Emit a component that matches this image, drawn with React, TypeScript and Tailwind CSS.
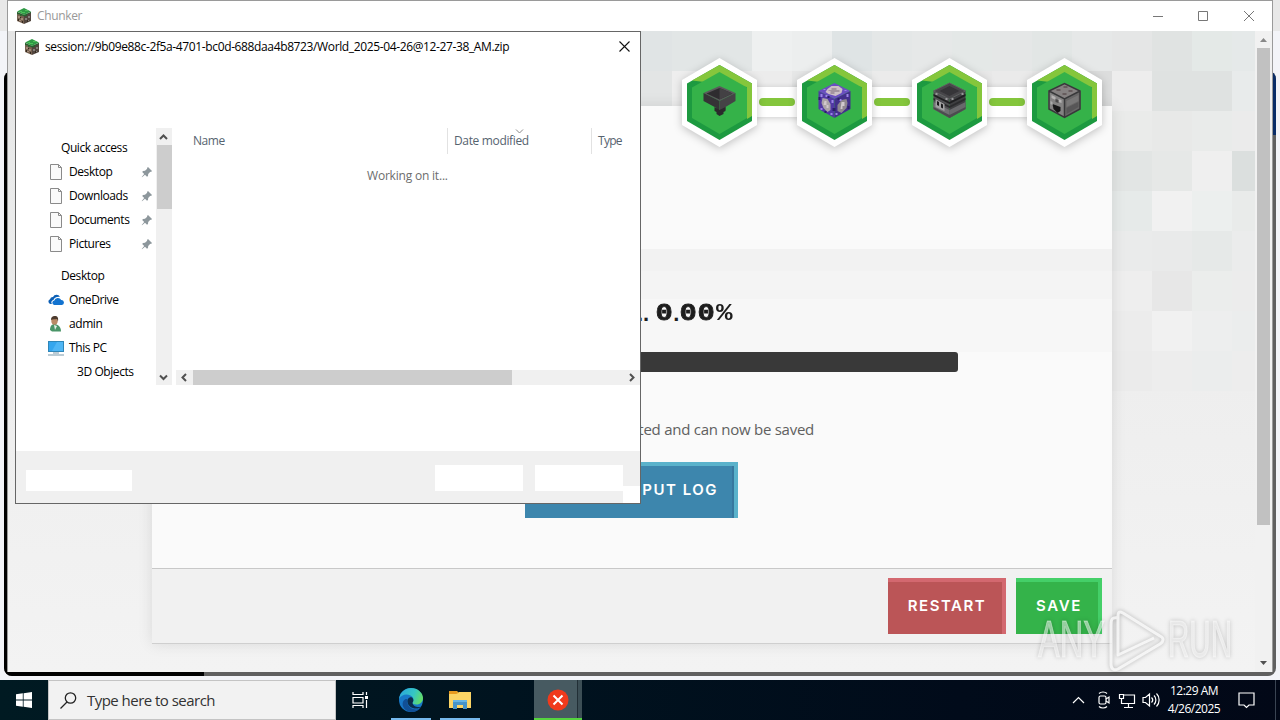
import type { ReactNode } from 'react';

const UI = "font-['Open_Sans','Noto_Sans',sans-serif]";

/* Background mosaic: 40px tiles [column x, row y, colour] */
const TILES: [number, number, string][] = [
  [624, 0, '#e0e4e5'], [664, 0, '#e2e6e6'], [704, 0, '#e2e6e6'], [744, 0, '#eef0f0'], [784, 0, '#eceeee'], [824, 0, '#dfe4e5'],
  [864, 0, '#e4e7e7'], [904, 0, '#e6e8e8'], [944, 0, '#e4e8e7'], [984, 0, '#e5e7e7'], [1024, 0, '#e2e6e5'], [1064, 0, '#e6e8e8'],
  [1104, 0, '#e5e6e6'], [1144, 0, '#e0e3e2'], [1184, 0, '#e4e9e7'], [1224, 0, '#e5e9e9'],
  [624, 40, '#e3e5e5'], [664, 40, '#eeeeee'], [704, 40, '#ececec'], [744, 40, '#ececec'], [784, 40, '#e6e7e7'], [824, 40, '#e6e8e8'],
  [864, 40, '#ebebeb'], [904, 40, '#ececec'], [944, 40, '#e8e8e8'], [984, 40, '#eaeaea'], [1024, 40, '#e8e8e8'], [1064, 40, '#dcdddd'],
  [1104, 40, '#ededed'], [1144, 40, '#dfe2e1'], [1184, 40, '#dfe2e1'], [1224, 40, '#e8ebeb'],
  [1104, 80, '#eaebea'], [1144, 80, '#e8e9e8'], [1184, 80, '#e9ebea'], [1224, 80, '#ebebeb'],
  [1104, 120, '#e2e5e4'], [1144, 120, '#e6e8e7'], [1184, 120, '#efefef'], [1224, 120, '#dbdfde'],
  [1104, 160, '#e6eae9'], [1144, 160, '#f1f1f1'], [1184, 160, '#ecefee'], [1224, 160, '#e9ebea'],
  [1104, 200, '#eaebeb'], [1144, 200, '#e9eaea'], [1184, 200, '#e6e9e8'], [1224, 200, '#ebecec'],
  [1104, 240, '#eeeeee'], [1144, 240, '#e7e7e7'], [1184, 240, '#ebedec'], [1224, 240, '#ececec'],
  [1104, 280, '#ececec'], [1144, 280, '#f1f1f1'], [1184, 280, '#edeeee'], [1224, 280, '#ebeded'],
  [1104, 320, '#ebebeb'], [1144, 320, '#ededed'], [1184, 320, '#ebeded'], [1224, 320, '#ededed'],
];

function Mosaic() {
  return (
    <svg className="absolute inset-0" width="1247" height="641">
      <defs>
        <linearGradient id="side" x1="0" x2="0" y1="0" y2="1">
          <stop offset="0" stopColor="#e4e4e4" />
          <stop offset="0.2" stopColor="#e9eaea" />
          <stop offset="0.55" stopColor="#eeeeee" />
          <stop offset="1" stopColor="#f3f3f3" />
        </linearGradient>
      </defs>
      <rect width="1247" height="641" fill="url(#side)" />
      {TILES.map(([x, y, c]) => (
        <rect key={`${x}-${y}`} x={x} y={y} width="40" height="40" fill={c} shapeRendering="crispEdges" />
      ))}
    </svg>
  );
}

function GrassBlock() {
  return (
    <svg width="16" height="16" viewBox="0 0 16 16">
      <path d="M1 4v9l7 3V7z" fill="#75604f" />
      <path d="M15 4v9l-7 3V7z" fill="#51453e" />
      <path d="M1 3.500 8 0l7 3.500L8 7z" fill="#2f9a45" />
      <path d="M3 3h3v1h3v1H6zM9 2h3v1H9z" fill="#4cc05a" />
      <path d="M1 4l7 3v1.500l-2-1-2 .5V6.500L1 6zM15 4 8 7v1.500l2-.8 1 .3V6.500l4-1.500z" fill="#24632f" />
      <path d="M2 8h2v2H2zM5 10h2v2H5zM3 12h2v1H3z" fill="#a18a78" />
      <path d="M9 10h2v2H9zM12 8h2v2h-2zM12 12h1v1h-1z" fill="#85807c" />
      <path d="M2 11h1v2H2zM6 13h1v2H6zM4 9h1v1H4zM11 12h1v2h-1z" fill="#33291f" />
    </svg>
  );
}

function Cube({ top, left, right, children }: { top: string; left: string; right: string; children?: ReactNode }) {
  return (
    <g>
      <path d="M3 9 19 1l16 8-16 8z" fill={top} />
      <path d="M3 9v18l16 9V17z" fill={left} />
      <path d="M35 9v18l-16 9V17z" fill={right} />
      {children}
    </g>
  );
}

function Hopper() {
  return (
    <g>
      <path d="M3 11 19 4l16 7-16 8z" fill="#5b595c" />
      <path d="M6 11.500 19 6l13 5.500-13 6z" fill="#2e2c2f" />
      <path d="M19 6 32 11.500l-13 6z" fill="#434144" />
      <path d="M3 11l16 8v11l-3-1v-3L3 19z" fill="#353336" />
      <path d="M35 11l-16 8v11l6-2v-3l10-6z" fill="#454346" />
      <path d="M14 25l5 3 6-3v4l-2 1v2l-4 2-3-2v-2l-2-1z" fill="#2b292c" />
    </g>
  );
}

function CommandBlock() {
  return (
    <Cube top="#6a4fc0" left="#5138a4" right="#432f8c">
      <path d="M12 7 16 4h7l4 3-1 4-6 3-7-2-3-2z" fill="#cdbfc6" />
      <path d="M16 6h5v2h3v2h-5v2h-4V9h-2V8h3z" fill="#a4949f" />
      <path d="M7 16l5 1 3 5v6l-3 2-4-4-2-5z" fill="#aaa3a7" />
      <path d="M31 17l-5 1-4 5v6l4 2 5-5 1-5z" fill="#8f878f" />
      <path d="M9 19h2v4h2v3h-2v-3H8zM26 20h3v4h-2v3h-2z" fill="#d1c8cd" />
      <path d="M5 12h2v3H5zM5 26h2v2H5zM16 18h2v3h-2zM31 12h2v3h-2zM20 31h2v2h-2zM8 7h2v1H8zM29 8h2v1h-2zM15 31h2v2h-2zM24 17h2v2h-2zM10 13h2v2h-2z" fill="#9b84e6" />
      <path d="M3 15h2v3H3zM17 26h3v3h-3zM32 24h2v3h-2zM22 16h2v2h-2zM12 14h2v2h-2zM9 29h2v2H9z" fill="#2c1d68" />
    </Cube>
  );
}

function BlastFurnace() {
  return (
    <Cube top="#48474a" left="#505053" right="#3f3f42">
      <path d="M9 9l10-5 10 5-10 5z" fill="#363538" />
      <path d="M3 9 19 1l16 8-16 8z" fill="none" stroke="#5e5d60" />
      <path d="M3 12l16 8v2L3 14zM35 12l-16 8v2l16-8z" fill="#1f1f21" />
      <path d="M3 16l16 8v2L3 18zM35 16l-16 8v2l16-8z" fill="#2b2b2d" />
      <path d="M3 20l16 8v8L3 27z" fill="#717174" />
      <path d="M19 28l16-8v7l-16 9z" fill="#69696c" />
      <path d="M3 25l16 8v3L3 27zM35 25l-16 8v3l16-9z" fill="#4c4c4f" />
      <path d="M5 17l9 5v7l-9-4z" fill="#a2a2a3" />
      <path d="M6.500 19l2 1v4l-2-1zM10.500 21.500l2 1v4l-2-1z" fill="#1c1c1e" />
      <path d="M5 11h2v2H5zM15 16h2v2h-2zM21 16h2v2h-2zM31 11h2v2h-2z" fill="#98989a" />
    </Cube>
  );
}

function Dropper() {
  return (
    <Cube top="#858181" left="#838282" right="#686767">
      <path d="M11 7h4v2h-4zM18 4h4v2h-4zM23 8h4v2h-4zM17 11h4v2h-4z" fill="#665c5d" />
      <path d="M6 13l4 2v3l-4-2zM13 17l3 1v3l-3-1z" fill="#b5b3b3" />
      <path d="M10 17l3 1v3l-3-1z" fill="#4c4b4c" />
      <path d="M7 22l8 3v4l-3 2-4-4z" fill="#161617" />
      <path d="M5 19l2 1v3l-2-1z" fill="#aaa" />
      <path d="M21 19l12-6v6l-12 6z" fill="#787777" />
      <path d="M21 26l12-6v5l-12 7z" fill="#575657" />
      <path d="M3.500 9 19 1.500 34.500 9v18L19 35.500 3.500 27zM19 17v18M3.500 9 19 17 34.500 9" fill="none" stroke="#38383a" strokeWidth="1.500" />
    </Cube>
  );
}

function Hexagon({ children }: { children: ReactNode }) {
  return (
    <svg width="75" height="89" viewBox="0 0 75 89" className="shrink-0 drop-shadow-[0_2px_4px_rgba(0,0,0,0.22)]">
      <path d="M37.500 0 75 22v45L37.500 89 0 67V22z" fill="#fff" />
      <path d="M37.500 7 70 25.500V63L37.500 82 5 63V25.500z" fill="#1d9a40" />
      <path d="M10 22.500 37.500 7 70 25.500V58l-5 3V29z" fill="#85c63c" />
      <path d="M37.500 14 65 29.500V60L37.500 76 10 60V29.500z" fill="#35b249" />
      <g transform="translate(18.500 24)">{children}</g>
    </svg>
  );
}

function Link() {
  return (
    <div className="-mx-1 mb-0.5 flex h-[30px] w-12 shrink-0 items-center justify-center bg-white shadow-[0_1px_6px_rgba(0,0,0,0.18)]">
      <div className="h-2 w-9 rounded bg-[#84c63c]" />
    </div>
  );
}

function Steps() {
  return (
    <div className="absolute left-[674px] top-[27px] flex items-center">
      <div className="relative z-10 flex"><Hexagon><Hopper /></Hexagon></div>
      <Link />
      <div className="relative z-10 flex"><Hexagon><CommandBlock /></Hexagon></div>
      <Link />
      <div className="relative z-10 flex"><Hexagon><BlastFurnace /></Hexagon></div>
      <Link />
      <div className="relative z-10 flex"><Hexagon><Dropper /></Hexagon></div>
    </div>
  );
}

function Percent() {
  return (
    <div className="flex h-6 items-center whitespace-pre font-['Liberation_Mono',monospace] text-[24px] font-bold leading-6 text-[#1d1d1d]">
      <span className="font-['Liberation_Sans',sans-serif] text-[22px]">..</span>
      <span className="ml-1.5 flex w-[18px] justify-center"><span className="inline-block scale-x-[1.2] [-webkit-text-stroke:0.8px_#1d1d1d]">0</span></span>
      <span className="w-1.5 font-['Liberation_Sans',sans-serif] text-[22px]">.</span>
      <span className="flex w-[18px] justify-center"><span className="inline-block scale-x-[1.2] [-webkit-text-stroke:0.8px_#1d1d1d]">0</span></span>
      <span className="flex w-[18px] justify-center"><span className="inline-block scale-x-[1.2] [-webkit-text-stroke:0.8px_#1d1d1d]">0</span></span>
      <span className="flex w-[18px] justify-center"><span className="inline-block scale-x-[1.15]">%</span></span>
    </div>
  );
}

function AppWindow() {
  return (
    <section className="absolute left-[7px] top-0 flex h-[672px] w-[1266px] flex-col border border-[#9a9a9a] border-b-0 bg-white">
      <header className="flex h-[30px] shrink-0 items-center bg-white pl-2">
        <GrassBlock />
        <span className="ml-[5px] text-[12px] tracking-[-0.35px] text-[#999]">Chunker</span>
        <svg className="ml-auto mr-4 -mt-px" width="104" height="12" viewBox="0 0 104 12" fill="none" stroke="#777">
          <path d="M1 6.500h10M46.500 1.500h9v9h-9zM92 1l10 10M102 1 92 11" />
        </svg>
      </header>
      <div className="flex min-h-0 grow">
        <main className="relative grow overflow-hidden">
          <Mosaic />
          <div className="relative ml-36 mt-[75px] flex h-[538px] w-[960px] flex-col border-b border-[#cfcfcf] bg-[#fafafa] shadow-[0_0_14px_rgba(0,0,0,0.10)]">
            <div className="h-[143px] shrink-0" />
            <div className="flex h-[319px] shrink-0 flex-col bg-[linear-gradient(#f2f2f2_0_22px,#f4f4f4_22px_50px,#f7f7f7_50px_103px,#fafafa_103px)]">
              <div className="ml-[485px] mt-[53px]"><Percent /></div>
              <div className="mx-[154px] mt-[26px] h-5 shrink-0 rounded-[3px] bg-[#393939]" />
              <p className="mr-[298px] mt-[45px] text-right text-[15px] leading-6 tracking-[-0.26px] text-[#606060]">ted and can now be saved</p>
              <button className="ml-[373px] mt-[21px] h-14 w-[213px] shrink-0 border-r-4 border-t-4 border-[#5ab2cb] bg-[#3d86ad] pb-1 pr-4 text-right font-['Inter',sans-serif] text-[15px] font-semibold tracking-[1.500px] text-white shadow-[inset_-2px_0_0_#37789f]">
                PUT LOG
              </button>
            </div>
            <div className="flex grow items-start justify-end gap-2.5 border-t border-[#c8c8c8] bg-[#f1f1f1] pr-2.5 pt-[9px] font-['Inter',sans-serif] text-[15px] font-semibold text-white">
              <button className="h-14 w-[118px] border-r-4 border-t-4 border-[#d3686f] bg-[#bb5557] pb-1 pl-1 tracking-[1.500px]">RESTART</button>
              <button className="h-14 w-[86px] border-r-4 border-t-4 border-[#44cf68] bg-[#34b34a] pb-1 pl-1 tracking-[1.700px]">SAVE</button>
            </div>
          </div>
          <Steps />
        </main>
        <aside className="flex w-[17px] shrink-0 flex-col items-center bg-[#f1f1f1]">
          <svg width="17" height="17" viewBox="0 0 17 17"><path d="M5 11h7L8.500 7z" fill="#888" /></svg>
          <div className="h-[477px] w-[13px] bg-[#c1c1c1]" />
          <svg className="mt-auto" width="17" height="17" viewBox="0 0 17 17"><path d="M5 6h7l-3.500 4z" fill="#505050" /></svg>
        </aside>
      </div>
    </section>
  );
}

function FileIcon() {
  return (
    <svg width="16" height="16" viewBox="0 0 16 16">
      <path d="M2.500.5h8l3 3v12h-11z" fill="#fafafa" stroke="#8a8a8a" />
      <path d="M10.500.5v3h3" fill="none" stroke="#8a8a8a" />
    </svg>
  );
}

function Pin() {
  return (
    <svg width="12" height="12" viewBox="0 0 12 12">
      <path d="M7 1l4 4-1 1-.7-.2L7.200 8l-.2 2-1 .7-2-2L1 11.300.7 11 3.200 8l-2-2L2 5l2-.2L6.200 2.700 6 2z" fill="#8d979c" />
    </svg>
  );
}

function OneDriveIcon() {
  return (
    <svg width="16" height="16" viewBox="0 0 16 16">
      <path d="M4 12H2.500A2.500 2.500 0 0 1 2 7.200 3 3 0 0 1 5 5a4 4 0 0 1 7-.2C8 4.500 6 6 5.500 8 3 8.500 3 11 4 12z" fill="#0c5fb5" />
      <path d="M6 13a2.300 2.300 0 0 1 .3-4.500 3.800 3.800 0 0 1 6.900-.6A2.600 2.600 0 0 1 14 13z" fill="#1273d0" />
    </svg>
  );
}

function PersonIcon() {
  return (
    <svg width="16" height="16" viewBox="0 0 16 16">
      <path d="M2 14c0-4 2-6 4.500-6S13 10 13 15.500H4z" fill="#4a9568" />
      <path d="M6 9l1 5 2-4z" fill="#e6efe8" />
      <ellipse cx="6.500" cy="4.800" rx="3.200" ry="4" fill="#b98a66" />
      <path d="M3 4C3 1 4.500 0 6.500 0c3.500 0 4 2 3.500 5.500L9 3C7 3.500 5 3 3 4z" fill="#4d3b2e" />
    </svg>
  );
}

function MonitorIcon() {
  return (
    <svg width="16" height="16" viewBox="0 0 16 16">
      <path d="M0 1h16v11H0z" fill="#2f86b8" />
      <path d="M1 2h14v9H1z" fill="#35a6ee" />
      <path d="M9 2h6v9H4z" fill="#4fb6f5" />
      <path d="M5 12.500h6v1H5zM0 14.500h16v1H0z" fill="#7a99ab" />
    </svg>
  );
}

function NavRow({ icon, label, pinned, pad = 'pl-8' }: { icon?: ReactNode; label: string; pinned?: boolean; pad?: string }) {
  return (
    <li className={`flex h-6 items-center pr-[3px] ${pad}`}>
      {icon && <span className="mr-[5px] flex">{icon}</span>}
      <span className="whitespace-nowrap">{label}</span>
      {pinned && <span className="ml-auto"><Pin /></span>}
    </li>
  );
}

function Chevron({ d }: { d: string }) {
  return (
    <svg width="16" height="16" viewBox="0 0 16 16" className="shrink-0">
      <path d={d} fill="none" stroke="#505050" strokeWidth="2" />
    </svg>
  );
}

function SaveDialog() {
  return (
    <section className="absolute left-[15px] top-[31px] flex h-[473px] w-[626px] flex-col border border-[#666] bg-white text-[12px] tracking-[-0.42px] text-black">
      <header className="flex h-[30px] shrink-0 items-center pl-2 pr-2.5">
        <GrassBlock />
        <span className="ml-[5px] whitespace-nowrap tracking-[-0.37px]">session://9b09e88c-2f5a-4701-bc0d-688daa4b8723/World_2025-04-26@12-27-38_AM.zip</span>
        <svg className="-mt-0.5 ml-auto" width="11" height="11" viewBox="0 0 11 11" stroke="#111" strokeWidth="1.100"><path d="M.5.5l10 10M10.500.5l-10 10" /></svg>
      </header>
      <div className="mt-[66px] flex h-[257px] shrink-0">
        <ul className="w-[140px] overflow-hidden pt-2">
          <NavRow label="Quick access" pad="pl-[45px]" />
          <NavRow icon={<FileIcon />} label="Desktop" pinned />
          <NavRow icon={<FileIcon />} label="Downloads" pinned />
          <NavRow icon={<FileIcon />} label="Documents" pinned />
          <NavRow icon={<FileIcon />} label="Pictures" pinned />
          <li className="h-2" />
          <NavRow label="Desktop" pad="pl-[45px]" />
          <NavRow icon={<OneDriveIcon />} label="OneDrive" />
          <NavRow icon={<PersonIcon />} label="admin" />
          <NavRow icon={<MonitorIcon />} label="This PC" />
          <NavRow label="3D Objects" pad="pl-[61px]" />
        </ul>
        <div className="mr-1 flex w-4 shrink-0 flex-col items-center bg-[#f0f0f0]">
          <Chevron d="M4 11 7.500 7.500 11 11" />
          <div className="mt-px h-16 w-[15px] bg-[#cdcdcd]" />
          <span className="mt-auto flex"><Chevron d="M4 6.500 7.500 10 11 6.500" /></span>
        </div>
        <div className="flex w-[464px] flex-col">
          <div className="flex h-[26px] shrink-0 items-center text-[#56636f]">
            <span className="w-[271px] pl-[17px]">Name</span>
            <span className="relative flex h-full w-36 items-center border-l border-[#e2e2e2] pl-1.5 tracking-[-0.35px]">
              Date modified
              <svg className="absolute left-[67px] top-px" width="9" height="5" viewBox="0 0 9 5" fill="none" stroke="#8a8a8a"><path d="M1 .5l3.500 3.500L8 .5" /></svg>
            </span>
            <span className="flex h-full items-center border-l border-[#e2e2e2] pl-1.5 tracking-[-0.7px]">Type</span>
          </div>
          <p className="mt-[13px] pl-[191px] tracking-[-0.2px] text-[#6d6d6d]">Working on it...</p>
          <div className="mt-auto flex h-[15px] items-center bg-[#f0f0f0]">
            <Chevron d="M10 4 6.500 7.500 10 11" />
            <div className="ml-px h-[15px] w-[319px] bg-[#cdcdcd]" />
            <span className="ml-auto flex"><Chevron d="M6 4 9.500 7.500 6 11" /></span>
          </div>
        </div>
      </div>
      <footer className="mt-auto flex h-[52px] shrink-0 items-start bg-[#f0f0f0] pl-2.5">
        <div className="mt-[19px] h-[21px] w-[106px] bg-white" />
        <div className="ml-auto mt-3.5 h-[26px] w-[88px] bg-white" />
        <div className="ml-3 mt-3.5 h-[26px] w-[88px] bg-white" />
        <div className="h-[17px] w-[17px] self-end bg-white" />
      </footer>
    </section>
  );
}

function Watermark() {
  return (
    <div className="absolute left-[1038px] top-[604px] flex h-[72px] items-center font-['Liberation_Sans',sans-serif] text-[51px] leading-[72px] text-white/50 drop-shadow-[0_0_2px_rgba(0,0,0,0.35)] [-webkit-text-stroke:1px_rgba(255,255,255,0.4)]">
      <span className="w-[66px]"><span className="inline-block origin-left scale-x-[0.64]">ANY</span></span>
      <svg width="64" height="72" viewBox="72 0 64 72" fill="none" stroke="#ffffff" strokeOpacity="0.75" strokeWidth="3" strokeLinejoin="round">
        <path d="M86 14c-6-1-7 1-7 7v39c0 5 3 7 7 5l42-25c4-3 4-6 0-8L91 9c-4-2-5-1-5 4v38l36-17" />
      </svg>
      <span className="w-[66px]"><span className="inline-block origin-left scale-x-[0.58]">RUN</span></span>
    </div>
  );
}

function Taskbar() {
  return (
    <footer className="absolute bottom-0 left-0 flex h-10 w-[1280px] bg-[linear-gradient(90deg,#001a22,#00131f_40%,#010b1a_75%,#020817)] text-white">
      <div className="flex w-12 items-center justify-center">
        <svg width="16" height="16" viewBox="0 0 16 16" fill="#fff"><path d="M0 2.300 6.800 1.300v6.300H0zM7.600 1.200 16 0v7.600H7.600zM0 8.400h6.800v6.400L0 13.800zM7.600 8.400H16V16l-8.400-1.200z" /></svg>
      </div>
      <div className="flex w-72 items-center border border-[#c4c4c4] bg-[#f2f2f2] pl-[11px] text-[15px] tracking-[-0.53px] text-[#333]">
        <svg className="mr-[10px]" width="17" height="17" viewBox="0 0 17 17" fill="none" stroke="#222" strokeWidth="1.300"><circle cx="10.500" cy="6" r="5.200" /><path d="M7 10 .5 16.500" /></svg>
        Type here to search
      </div>
      <div className="flex w-12 items-center justify-center">
        <svg width="17" height="16" viewBox="0 0 17 16" fill="none" stroke="#fff" strokeWidth="1.200"><path d="M1 0v2.500h10V0M1 5.500h10v5.500H1zM1 16v-2.500h10V16M14.500 0v3M14.500 8v8" /><path d="M13 4h3v3h-3z" fill="#fff" stroke="none" /></svg>
      </div>
      <div className="ml-[7px] flex w-10 flex-col items-center border-b-2 border-[#76b9ed]">
        <svg className="mt-[7px]" width="26" height="26" viewBox="0 0 26 26">
          <defs>
            <linearGradient id="edgeTop" x1="0" x2="1" y1="0.2" y2="0.5"><stop offset="0" stopColor="#2aa6dc" /><stop offset="0.6" stopColor="#35c6c4" /><stop offset="1" stopColor="#63dd68" /></linearGradient>
          </defs>
          <circle cx="13" cy="13" r="12" fill="#1878c8" />
          <path d="M1 12C2 5 7 1 13 1c7 0 12 5 12 10 0 4-3 6.500-6.500 6.500-3 0-4.500-1-4-2 1.500-1.500 1.500-5.500-2-7C8 6.500 3 8 1 12z" fill="url(#edgeTop)" />
          <path d="M9.500 12c-1.500 4 1.500 10 8 10.500 2 .2 3.500-.5 5-1.500-3 4-9 5-13 3-5-2-7-9-2-12z" fill="#114f96" />
          <path d="M14.500 15.500c1.500-1.500 1-4.500-1-5.300-2.500-.5-4.500 2-4 4.800.5 4 4 6.500 8.500 6.500 2.500 0 4-.8 5-1.800-3 .8-8.500 0-8.500-4.200z" fill="#0b2c4c" />
        </svg>
      </div>
      <div className="ml-[9px] flex w-10 flex-col items-center border-b-2 border-[#76b9ed]">
        <svg className="mt-[10px]" width="22" height="20" viewBox="0 0 22 20">
          <path d="M0 1h8l2 2h12v15H0z" fill="#e9a52b" />
          <path d="M0 4h8l2-2h12v16H0z" fill="#fbd465" />
          <path d="M0 1h7l1 1.500L7 4H0z" fill="#e79a1f" />
          <path d="M4 19v-9h14v9h-4v-4H8v4z" fill="#4593c8" />
          <path d="M4 10h14v2H4z" fill="#65b4e4" />
        </svg>
      </div>
      <div className="ml-[54px] flex w-12 border-b-2 border-[#55d43f] bg-[#3c4e55]">
        <div className="flex w-[44px] items-center justify-center border-r border-[#222f36] bg-[#475a61] pl-1 pt-px">
          <svg width="22" height="22" viewBox="0 0 22 22"><circle cx="11" cy="11" r="10.500" fill="#f03a1c" /><path d="M6.500 6.500l9 9M15.500 6.500l-9 9" stroke="#fff" strokeWidth="2" /></svg>
        </div>
      </div>
      <div className="ml-auto mr-1 flex items-center border-r border-[#3a4452] pr-5">
        <svg className="-mr-1" width="90" height="20" viewBox="0 0 90 20" fill="none" stroke="#fff" strokeWidth="1.200">
          <path d="M1 13l5.500-5.500L12 13" />
          <rect x="27" y="6" width="7" height="8" rx="1.500" />
          <path d="M34 9l3-2v6l-3-2M27 3.500c2-2 6-2 8 0M27 16.500c2 2 6 2 8 0" />
          <path d="M52 5h10.500v8.500H50M56.500 13.500V17M52 17.500h9M47.500 4.500h4v4h-4zM49.500 8.500V14" />
          <path d="M71 7.500h2.500L77.500 4v12l-4-3.500H71zM79.500 7.500c1.500 1.500 1.500 3.500 0 5M82 5.500c2.500 2.500 2.500 6.500 0 9M84.500 3.500c3.500 3.500 3.500 9.500 0 13" />
        </svg>
        <div className="ml-[5px] flex w-[62px] flex-col items-center text-[12px] leading-[18px] tracking-[-0.5px]">
          <span>12:29 AM</span>
          <span>4/26/2025</span>
        </div>
        <svg className="ml-[13px]" width="17" height="17" viewBox="0 0 17 17" fill="none" stroke="#fff" strokeWidth="1.200"><path d="M1 1h15v12h-5l-2.500 2.500L6 13H1z" /></svg>
      </div>
    </footer>
  );
}

function BackWindow() {
  return (
    <div className="flex h-[680px] flex-col bg-[#f3f4f8]">
      <div className="h-[31px] shrink-0 bg-[#e8e8e8]" />
      <div className="mx-1 mb-1 mt-10 flex grow flex-col overflow-hidden rounded-lg bg-[#606060]">
        <div className="flex grow justify-between">
          <div className="w-1 bg-black" />
          <div className="h-16 w-1 bg-[#0a2c66]" />
        </div>
        <div className="h-1 w-[200px] bg-black" />
      </div>
    </div>
  );
}

export default function App() {
  return (
    <div className={`relative h-[720px] w-[1280px] overflow-hidden ${UI}`}>
      <BackWindow />
      <AppWindow />
      <SaveDialog />
      <Taskbar />
      <Watermark />
    </div>
  );
}
